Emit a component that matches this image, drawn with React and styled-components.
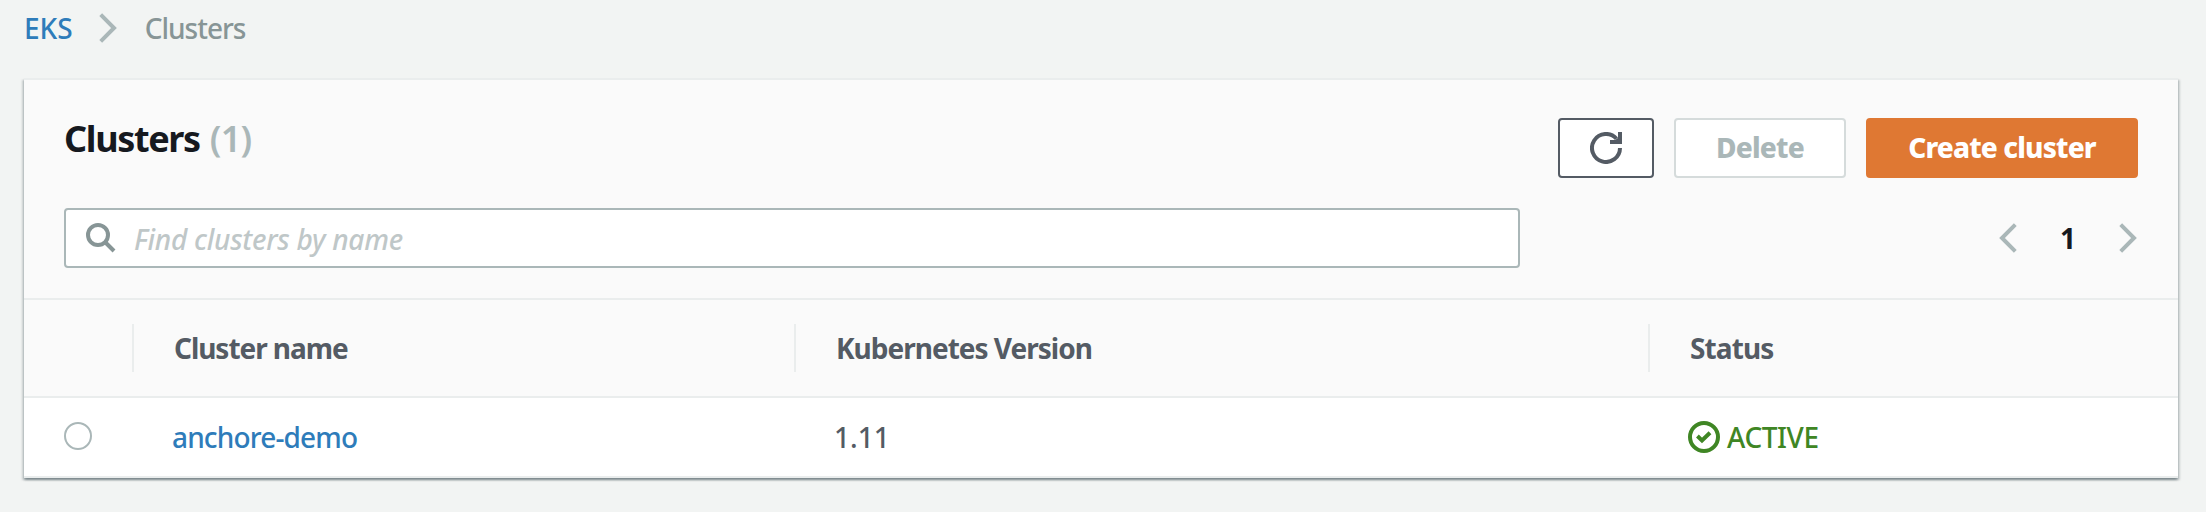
import React from 'react';
import styled, { createGlobalStyle } from 'styled-components';

const Global = createGlobalStyle`
  *, *::before, *::after { box-sizing: border-box; }
  body { margin: 0; background: #f2f4f3; }
`;

const Page = styled.div`
  height: 512px;
  padding: 0 28px 0 24px;
  background: #f2f4f3;
  color: #545b64;
  font: 500 28px/40px 'Noto Sans', sans-serif;
  overflow: hidden;
`;

const Label = styled.span`
  letter-spacing: ${(p) => p.$track || 0}px;
  white-space: nowrap;
`;

const Breadcrumbs = styled.nav`
  display: flex;
  align-items: flex-start;
  height: 57px;
  padding-top: 8px;
  color: #879596;
  svg { margin: 5px 28px 0 26px; }
`;

const Link = styled.a`
  color: #2e7cba;
  text-decoration: none;
`;

const Panel = styled.section`
  margin-top: 21px;
  background: #fff;
  border-top: 2px solid #eaeded;
  box-shadow: 0 2px 2px 0 rgba(0, 28, 36, 0.3), 2px 2px 2px 0 rgba(0, 28, 36, 0.15),
    -2px 2px 2px 0 rgba(0, 28, 36, 0.15);
`;

const PanelHeader = styled.header`
  height: 220px;
  padding: 38px 40px 0;
  background: #fafafa;
  border-bottom: 2px solid #eaeded;
`;

const TitleRow = styled.div`
  display: flex;
  align-items: flex-start;
  justify-content: space-between;
  height: 90px;
`;

const Title = styled.h2`
  margin: 0;
  color: #16191f;
  font-size: 36px;
  line-height: 41px;
  font-weight: 700;
`;

const Count = styled.span`
  margin-left: 10px;
  color: #aab7b8;
  font-weight: 600;
  letter-spacing: -0.8px;
`;

const Actions = styled.div`
  display: flex;
  gap: 20px;
`;

const Button = styled.button`
  display: flex;
  align-items: center;
  justify-content: center;
  width: ${(p) => p.$width}px;
  height: 60px;
  padding: 0;
  border: 2px solid ${(p) => p.$edge};
  border-radius: 4px;
  background: ${(p) => p.$fill || '#fff'};
  color: ${(p) => p.$ink};
  font: 800 28px/40px 'Noto Sans', sans-serif;
  ${Label} { padding-bottom: 2px; }
`;

const FilterRow = styled.div`
  display: flex;
  align-items: center;
  justify-content: space-between;
`;

const Search = styled.div`
  display: flex;
  align-items: center;
  width: 1456px;
  height: 60px;
  padding-left: 20px;
  border: 2px solid #aab7b8;
  border-radius: 4px;
  background: #fff;
  color: #bfc7c8;
  font-style: italic;
  svg { margin-right: 18px; }
  ${Label} { padding-top: 2px; }
`;

const Pager = styled.div`
  display: flex;
  align-items: center;
  gap: 43px;
  margin-right: 1px;
  color: #16191f;
  font-weight: 700;
`;

const Columns = styled.div`
  display: grid;
  grid-template-columns: 108px 662px 854px 1fr;
  align-items: center;
`;

const HeadRow = styled(Columns)`
  height: 98px;
  background: #fafafa;
  border-bottom: 2px solid #eaeded;
  font-weight: 700;
`;

const HeadCell = styled.div`
  display: flex;
  align-items: center;
  height: 48px;
  padding-left: 40px;
  border-left: 2px solid #eaeded;
`;

const BodyRow = styled(Columns)`
  height: 80px;
  border-bottom: 2px solid #eaeded;
`;

const Cell = styled.div`
  display: flex;
  align-items: center;
  padding-left: 40px;
`;

const Radio = styled.span`
  width: 28px;
  height: 28px;
  margin: 0 0 2px 40px;
  border: 2px solid #aab7b8;
  border-radius: 50%;
  background: #fff;
`;

const Status = styled(Cell)`
  gap: 7px;
  color: #3f8624;
`;

const Chevron = ({ left }) => (
  <svg width="18" height="30" viewBox="0 0 18 30" fill="none" stroke="#aab7b8" strokeWidth="4">
    <path d={left ? 'M16.3 1.700 3 15 16.3 28.300' : 'M1.700 1.700 15 15 1.700 28.300'} />
  </svg>
);

export default function App() {
  return (
    <Page>
      <Global />
      <Breadcrumbs>
        <Link><Label>EKS</Label></Link>
        <Chevron />
        <Label $track={-1}>Clusters</Label>
      </Breadcrumbs>
      <Panel>
        <PanelHeader>
          <TitleRow>
            <Title><Label $track={-1.35}>Clusters</Label><Count>(1)</Count></Title>
            <Actions>
              <Button $width={96} $edge="#545b64" $ink="#545b64" aria-label="Refresh">
                <svg width="32" height="32" viewBox="0 0 32 32" fill="none" stroke="currentColor" strokeWidth="4">
                  <path d="M30 16A14 14 0 1 1 26.500 6.700M30 0V10H20" />
                  <path d="M29 5V9H24Z" fill="currentColor" stroke="none" />
                </svg>
              </Button>
              <Button $width={172} $edge="#d5dbdb" $ink="#aab7b8"><Label $track={-0.8}>Delete</Label></Button>
              <Button $width={272} $edge="#df7833" $fill="#df7833" $ink="#fff"><Label $track={-0.85}>Create cluster</Label></Button>
            </Actions>
          </TitleRow>
          <FilterRow>
            <Search>
              <svg width="30" height="30" viewBox="0 0 30 30" fill="none" stroke="#879596" strokeWidth="4">
                <circle cx="12" cy="12" r="10" />
                <path d="m19 19 9 9" />
              </svg>
              <Label $track={-0.27}>Find clusters by name</Label>
            </Search>
            <Pager><Chevron left /><Label>1</Label><Chevron /></Pager>
          </FilterRow>
        </PanelHeader>
        <HeadRow>
          <span />
          <HeadCell><Label $track={-1.05}>Cluster name</Label></HeadCell>
          <HeadCell><Label $track={-1}>Kubernetes Version</Label></HeadCell>
          <HeadCell><Label $track={-0.9}>Status</Label></HeadCell>
        </HeadRow>
        <BodyRow>
          <Radio />
          <Cell><Link><Label $track={-0.85}>anchore-demo</Label></Link></Cell>
          <Cell><Label>1.11</Label></Cell>
          <Status>
            <svg width="32" height="32" viewBox="0 0 32 32" fill="none" stroke="currentColor" strokeWidth="4">
              <circle cx="16" cy="16" r="14" />
              <path d="M9.400 15 14 19.400 22 11.800" />
            </svg>
            <Label $track={-0.4}>ACTIVE</Label>
          </Status>
        </BodyRow>
      </Panel>
    </Page>
  );
}
